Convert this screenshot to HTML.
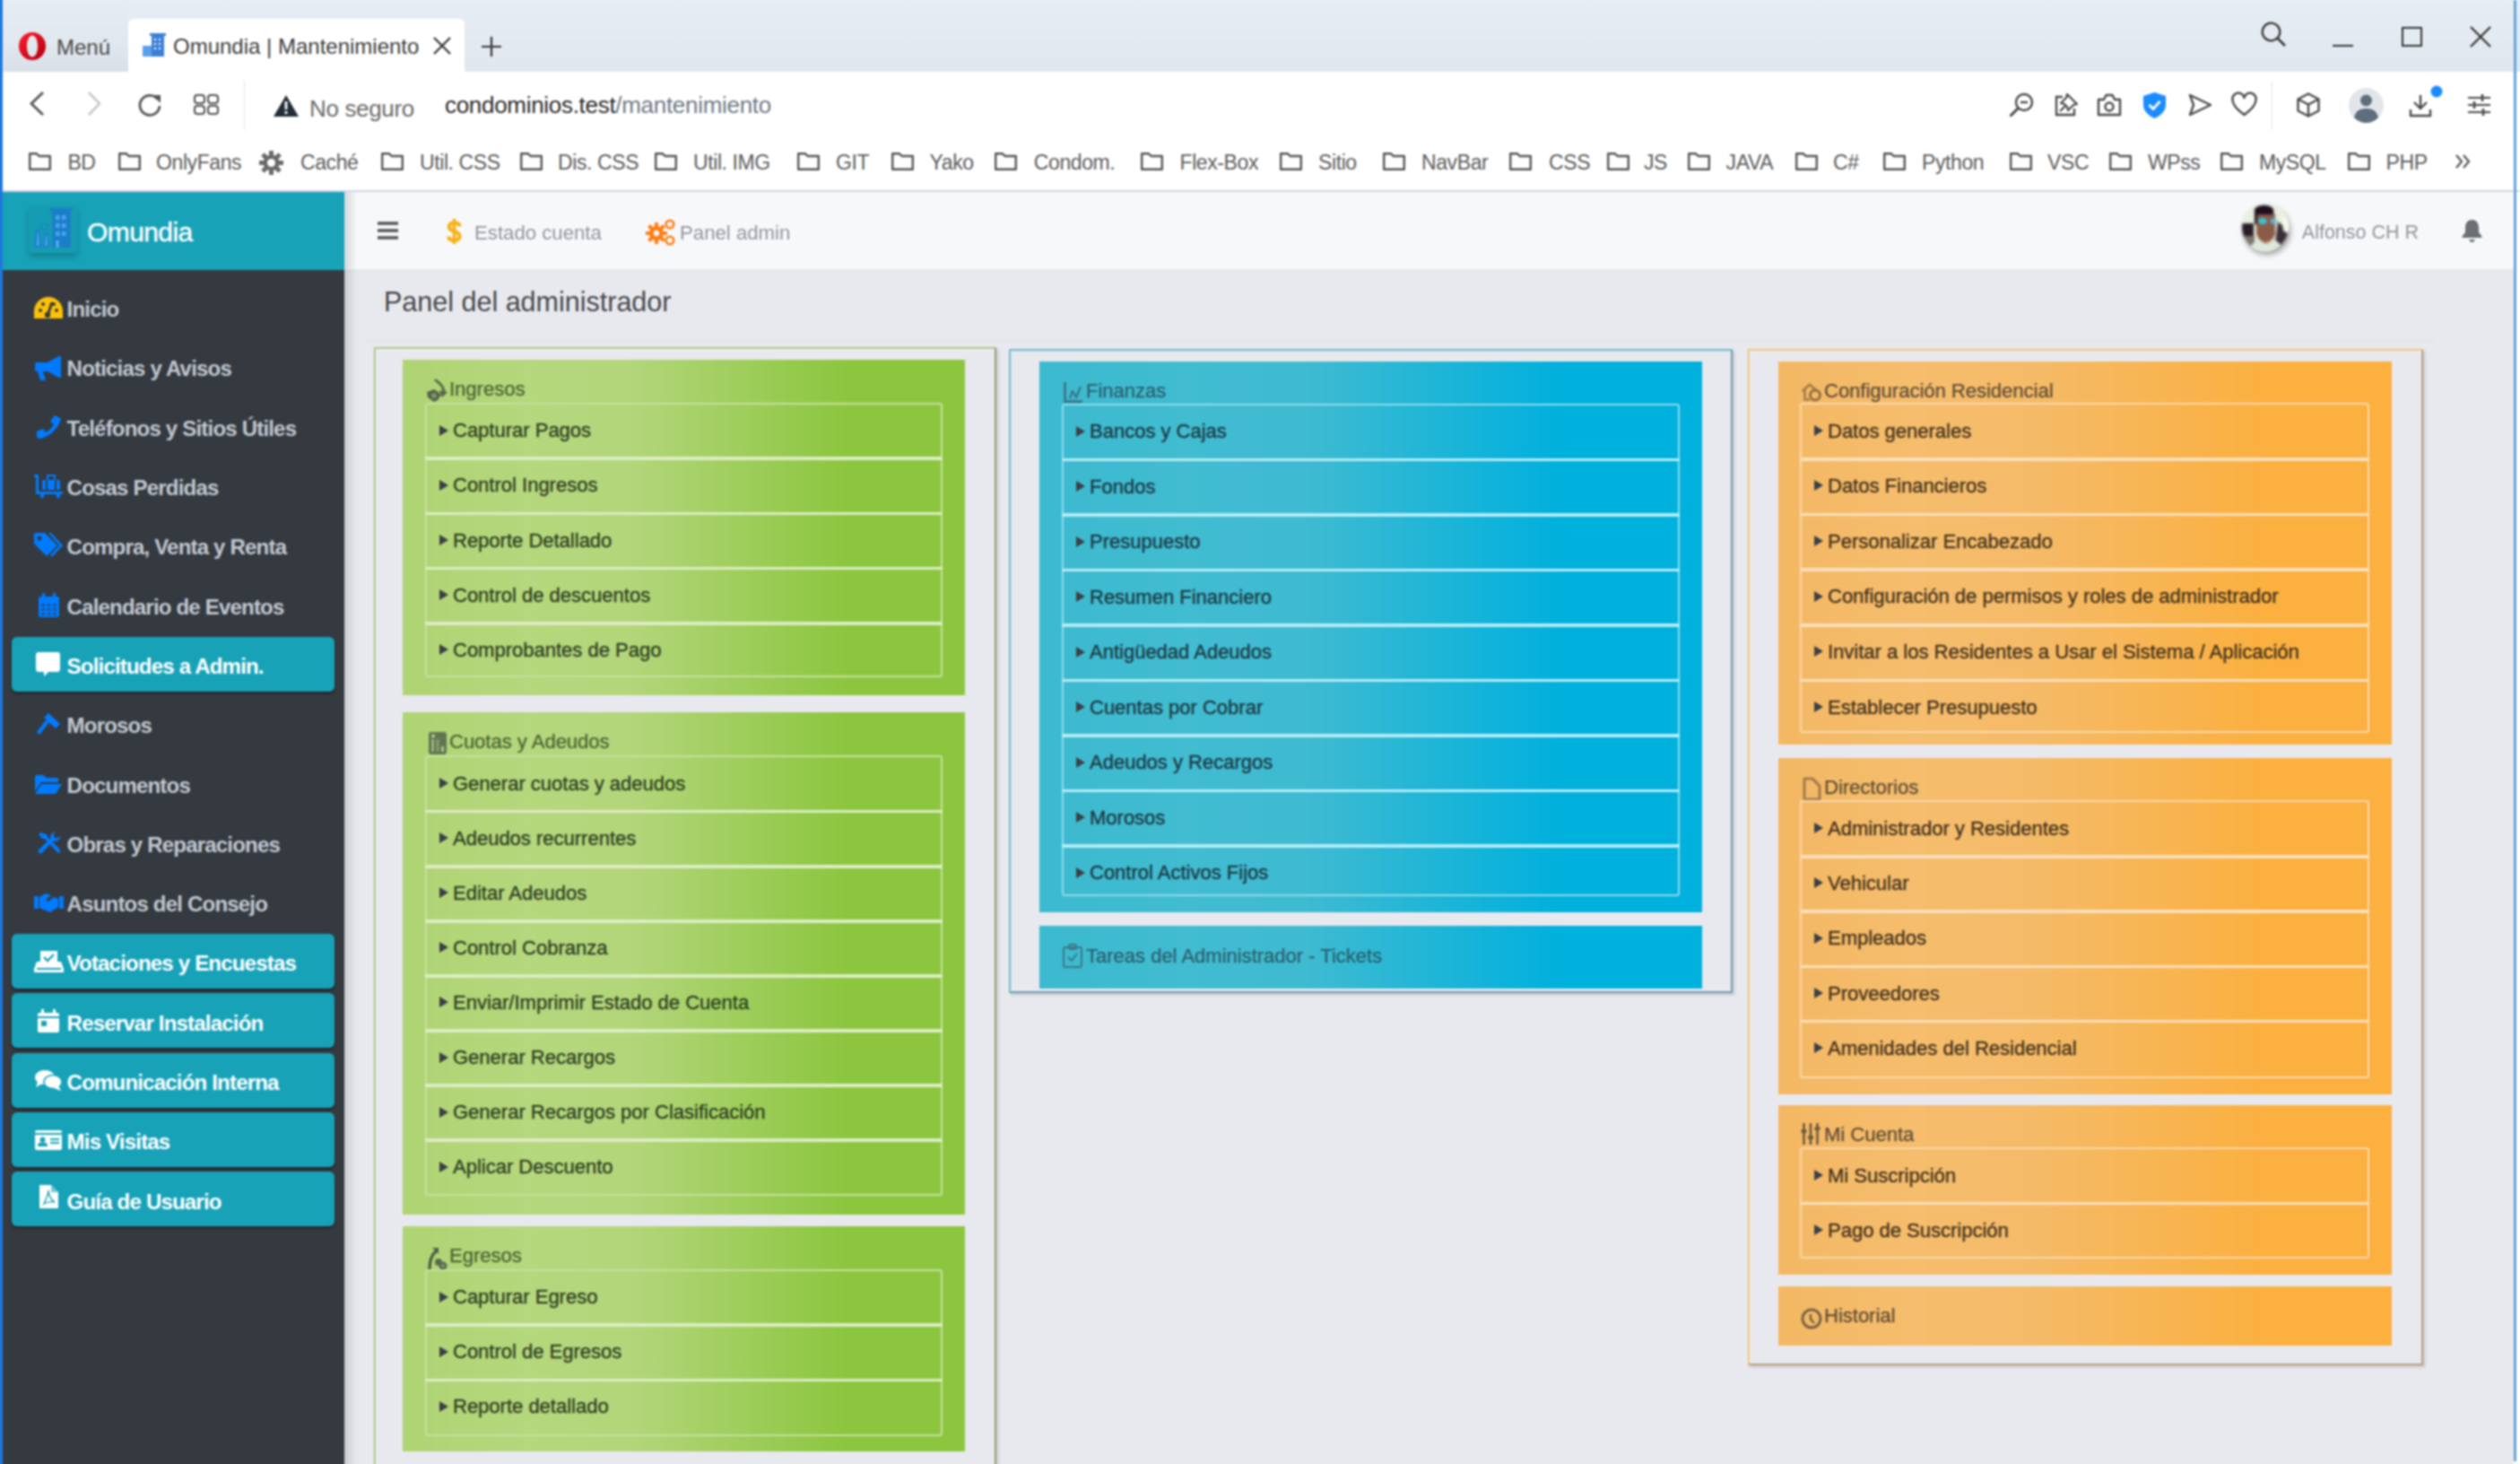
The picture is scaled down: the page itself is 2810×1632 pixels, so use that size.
<!DOCTYPE html>
<html><head><meta charset="utf-8">
<style>
*{box-sizing:border-box;margin:0;padding:0}
html,body{width:2810px;height:1632px;overflow:hidden;background:#fff}
body{position:relative;font-family:"Liberation Sans",sans-serif}
.a{position:absolute}
.t{position:absolute;white-space:nowrap}
svg{position:absolute;overflow:visible}

</style></head><body>
<div style="position:absolute;left:0;top:0;width:2810px;height:1632px;filter:blur(1px)">
<div class="a" style="left:-6px;top:-6px;width:2822px;height:86px;background:linear-gradient(#e7edf4 7%,#e1e7ef)"></div>
<div class="a" style="left:5px;top:0;width:138px;height:80px;background:linear-gradient(#e6ecf3 0%,#e2e8f0 60%,#d9dfe7 100%)"></div>
<div class="a" style="left:0;top:80px;width:2810px;height:133px;background:#fff"></div>
<div class="a" style="left:0;top:212px;width:2810px;height:2px;background:#cfd6df"></div>
<div class="a" style="left:143px;top:21px;width:375px;height:60px;background:#fff;border-radius:6px 6px 0 0"></div>
<svg style="left:21px;top:36px" width="30" height="31" viewBox="0 0 30 31"><defs><linearGradient id="opg" x1="0" y1="0" x2="1" y2="1"><stop offset="0" stop-color="#ff1b2d"/><stop offset="1" stop-color="#b0000f"/></linearGradient></defs><path fill-rule="evenodd" fill="url(#opg)" d="M15 0A15 15.5 0 1 1 15 31A15 15.5 0 1 1 15 0ZM15 3.5C11.5 3.5 9 8.5 9 15.5C9 22.5 11.5 27.5 15 27.5C18.5 27.5 21 22.5 21 15.5C21 8.5 18.5 3.5 15 3.5Z"/></svg>
<div class="t " style="left:63.0px;top:38.9px;font-size:24px;line-height:27.60px;color:#4a4a4a;font-weight:normal;">Menú</div>
<svg style="left:158px;top:37px" width="27" height="26" viewBox="0 0 27 26"><rect x="11" y="2" width="14" height="24" fill="#3c7fd6"/><rect x="9" y="0" width="18" height="3" fill="#3c7fd6"/><rect x="1" y="14" width="10" height="12" fill="#5aa0ea"/><rect x="14" y="6" width="2" height="2" fill="#fff"/><rect x="19" y="6" width="2" height="2" fill="#fff"/><rect x="14" y="11" width="2" height="2" fill="#fff"/><rect x="19" y="11" width="2" height="2" fill="#fff"/><rect x="14" y="16" width="2" height="2" fill="#fff"/><rect x="19" y="16" width="2" height="2" fill="#fff"/></svg>
<div class="t " style="left:193.0px;top:37.9px;font-size:24px;line-height:27.60px;color:#3c3c3c;font-weight:normal;letter-spacing:0px">Omundia&nbsp;|&nbsp;Mantenimiento</div>
<svg style="left:483px;top:41px" width="20" height="20" viewBox="0 0 20 20"><path d="M1 1L19 19M19 1L1 19" stroke="#333" stroke-width="2.2"/></svg>
<svg style="left:537px;top:41px" width="22" height="22" viewBox="0 0 22 22"><path d="M11 0V22M0 11H22" stroke="#333" stroke-width="2.2"/></svg>
<svg style="left:2521px;top:24px" width="30" height="29" viewBox="0 0 30 29"><circle cx="11.5" cy="11.5" r="9.8" fill="none" stroke="#3a3a3a" stroke-width="2.3"/><path d="M18 18L27 27" stroke="#3a3a3a" stroke-width="2.6"/></svg>
<div class="a" style="left:2601px;top:50px;width:23px;height:2px;background:#333"></div>
<div class="a" style="left:2678px;top:30px;width:23px;height:22px;border:2px solid #333"></div>
<svg style="left:2754px;top:30px" width="24" height="22" viewBox="0 0 24 22"><path d="M1 0L23 22M23 0L1 22" stroke="#333" stroke-width="2.2"/></svg>
<svg style="left:32px;top:102px" width="18" height="27" viewBox="0 0 18 27"><path d="M16 1L3 13.5L16 26" fill="none" stroke="#555" stroke-width="2.8"/></svg>
<svg style="left:97px;top:102px" width="16" height="27" viewBox="0 0 16 27"><path d="M2 1L14 13.5L2 26" fill="none" stroke="#c8c8c8" stroke-width="2.6"/></svg>
<svg style="left:153px;top:103px" width="28" height="27" viewBox="0 0 28 27"><path d="M23 8A11 11 0 1 0 25 15" fill="none" stroke="#555" stroke-width="2.8"/><path d="M17 3L26 3L26 12Z" fill="#555"/></svg>
<svg style="left:216px;top:105px" width="28" height="23" viewBox="0 0 28 23"><g fill="none" stroke="#505050" stroke-width="2"><rect x="1" y="1" width="11" height="9" rx="3"/><rect x="16" y="1" width="11" height="9" rx="3"/><rect x="1" y="13" width="11" height="9" rx="3"/><rect x="16" y="13" width="11" height="9" rx="3"/></g></svg>
<div class="a" style="left:272px;top:90px;width:1px;height:55px;background:#e3e3e3"></div>
<svg style="left:305px;top:106px" width="28" height="24" viewBox="0 0 28 24"><path d="M14 0L28 24H0Z" fill="#222d37"/><rect x="12.6" y="7" width="2.8" height="9" fill="#fff"/><rect x="12.6" y="18" width="2.8" height="3" fill="#fff"/></svg>
<div class="t " style="left:345.0px;top:107.0px;font-size:26px;line-height:29.90px;color:#6a6a6a;font-weight:normal;letter-spacing:-0.35px">No seguro</div>
<div class="t " style="left:496.0px;top:103.0px;font-size:26px;line-height:29.90px;color:#2a2a2a;font-weight:normal;letter-spacing:-0.3px">condominios.test<span style="color:#6f7a85">/mantenimiento</span></div>
<svg style="left:2240px;top:103px" width="28" height="28" viewBox="0 0 28 28"><circle cx="17" cy="11" r="9" fill="none" stroke="#4a4a4a" stroke-width="2.4"/><path d="M13 11H21" stroke="#4a4a4a" stroke-width="2.4"/><path d="M10.5 17.5L1.5 26.5" stroke="#4a4a4a" stroke-width="3"/></svg>
<svg style="left:2291px;top:103px" width="27" height="27" viewBox="0 0 27 27"><path d="M9 5H2V25H22V18" fill="none" stroke="#4a4a4a" stroke-width="2.3"/><path d="M14 2L25 13L21 14L15 20L14 16L11 13L7 12L13 6Z" fill="none" stroke="#4a4a4a" stroke-width="2.2" stroke-linejoin="round"/><path d="M6 21L12 15" stroke="#4a4a4a" stroke-width="2.3"/></svg>
<svg style="left:2338px;top:104px" width="28" height="26" viewBox="0 0 28 26"><path d="M2 7H8L10.5 2H17.5L20 7H26V24H2Z" fill="none" stroke="#4a4a4a" stroke-width="2.4" stroke-linejoin="round"/><circle cx="14" cy="15" r="4.5" fill="none" stroke="#4a4a4a" stroke-width="2.4"/></svg>
<svg style="left:2390px;top:103px" width="25" height="29" viewBox="0 0 25 29"><path d="M12.5 0L25 4V14C25 21 19 26 12.5 29C6 26 0 21 0 14V4Z" fill="#1a8cff"/><path d="M6.5 14L11 18.5L18.5 10" fill="none" stroke="#fff" stroke-width="2.8"/></svg>
<svg style="left:2440px;top:104px" width="27" height="26" viewBox="0 0 27 26"><path d="M2 2L25 13L2 24L6 13Z" fill="none" stroke="#4a4a4a" stroke-width="2.4" stroke-linejoin="round"/></svg>
<svg style="left:2488px;top:104px" width="29" height="26" viewBox="0 0 29 26"><path d="M14.5 24C5 17 1.5 12 1.5 7.5A6 6 0 0 1 14.5 5A6 6 0 0 1 27.5 7.5C27.5 12 24 17 14.5 24Z" fill="none" stroke="#4a4a4a" stroke-width="2.4" stroke-linejoin="round"/></svg>
<div class="a" style="left:2533px;top:92px;width:1px;height:53px;background:#e4e4e4"></div>
<svg style="left:2561px;top:103px" width="26" height="28" viewBox="0 0 26 28"><path d="M13 1.5L24.5 7.5V20.5L13 26.5L1.5 20.5V7.5Z M1.5 7.5L13 13.5L24.5 7.5 M13 13.5V26.5" fill="none" stroke="#4a4a4a" stroke-width="2.4" stroke-linejoin="round"/></svg>
<svg style="left:2619px;top:98px" width="39" height="39" viewBox="0 0 39 39"><circle cx="19.5" cy="19.5" r="19.5" fill="#e2e6ea"/><circle cx="19.5" cy="14" r="6.5" fill="#5f6e7c"/><path d="M6 33C8 25 13 23 19.5 23C26 23 31 25 33 33C29 37 24 39 19.5 39C15 39 10 37 6 33Z" fill="#5f6e7c"/></svg>
<svg style="left:2686px;top:102px" width="40" height="29" viewBox="0 0 40 29"><path d="M13 4V19M6 12L13 19L20 12" fill="none" stroke="#4a4a4a" stroke-width="2.4"/><path d="M2 20V27H24V20" fill="none" stroke="#4a4a4a" stroke-width="2.4"/><circle cx="31" cy="0" r="6.5" fill="#1a8cff"/></svg>
<svg style="left:2752px;top:105px" width="25" height="24" viewBox="0 0 25 24"><path d="M0 4H25M0 12H25M0 20H25" stroke="#4a4a4a" stroke-width="2.2"/><path d="M16 0V8M7 8V16M17 16V24" stroke="#4a4a4a" stroke-width="2.6"/></svg>
<svg style="left:32px;top:170px" width="25" height="20" viewBox="0 0 25 20"><path d="M1.2 1.2H9L11.5 4H23.8V18.8H1.2Z" fill="none" stroke="#555" stroke-width="2.4" stroke-linejoin="round"/></svg>
<div class="t " style="left:75.4px;top:167.8px;font-size:23px;line-height:26.45px;color:#5c5c5c;font-weight:normal;letter-spacing:-0.4px">BD</div>
<svg style="left:132px;top:170px" width="25" height="20" viewBox="0 0 25 20"><path d="M1.2 1.2H9L11.5 4H23.8V18.8H1.2Z" fill="none" stroke="#555" stroke-width="2.4" stroke-linejoin="round"/></svg>
<div class="t " style="left:174.0px;top:167.8px;font-size:23px;line-height:26.45px;color:#5c5c5c;font-weight:normal;letter-spacing:-0.4px">OnlyFans</div>
<div class="t " style="left:335.0px;top:167.8px;font-size:23px;line-height:26.45px;color:#5c5c5c;font-weight:normal;letter-spacing:-0.4px">Caché</div>
<svg style="left:425px;top:170px" width="25" height="20" viewBox="0 0 25 20"><path d="M1.2 1.2H9L11.5 4H23.8V18.8H1.2Z" fill="none" stroke="#555" stroke-width="2.4" stroke-linejoin="round"/></svg>
<div class="t " style="left:468.0px;top:167.8px;font-size:23px;line-height:26.45px;color:#5c5c5c;font-weight:normal;letter-spacing:-0.4px">Util. CSS</div>
<svg style="left:580px;top:170px" width="25" height="20" viewBox="0 0 25 20"><path d="M1.2 1.2H9L11.5 4H23.8V18.8H1.2Z" fill="none" stroke="#555" stroke-width="2.4" stroke-linejoin="round"/></svg>
<div class="t " style="left:622.0px;top:167.8px;font-size:23px;line-height:26.45px;color:#5c5c5c;font-weight:normal;letter-spacing:-0.4px">Dis. CSS</div>
<svg style="left:730px;top:170px" width="25" height="20" viewBox="0 0 25 20"><path d="M1.2 1.2H9L11.5 4H23.8V18.8H1.2Z" fill="none" stroke="#555" stroke-width="2.4" stroke-linejoin="round"/></svg>
<div class="t " style="left:773.0px;top:167.8px;font-size:23px;line-height:26.45px;color:#5c5c5c;font-weight:normal;letter-spacing:-0.4px">Util. IMG</div>
<svg style="left:889px;top:170px" width="25" height="20" viewBox="0 0 25 20"><path d="M1.2 1.2H9L11.5 4H23.8V18.8H1.2Z" fill="none" stroke="#555" stroke-width="2.4" stroke-linejoin="round"/></svg>
<div class="t " style="left:932.0px;top:167.8px;font-size:23px;line-height:26.45px;color:#5c5c5c;font-weight:normal;letter-spacing:-0.4px">GIT</div>
<svg style="left:994px;top:170px" width="25" height="20" viewBox="0 0 25 20"><path d="M1.2 1.2H9L11.5 4H23.8V18.8H1.2Z" fill="none" stroke="#555" stroke-width="2.4" stroke-linejoin="round"/></svg>
<div class="t " style="left:1036.5px;top:167.8px;font-size:23px;line-height:26.45px;color:#5c5c5c;font-weight:normal;letter-spacing:-0.4px">Yako</div>
<svg style="left:1109px;top:170px" width="25" height="20" viewBox="0 0 25 20"><path d="M1.2 1.2H9L11.5 4H23.8V18.8H1.2Z" fill="none" stroke="#555" stroke-width="2.4" stroke-linejoin="round"/></svg>
<div class="t " style="left:1152.8px;top:167.8px;font-size:23px;line-height:26.45px;color:#5c5c5c;font-weight:normal;letter-spacing:-0.4px">Condom.</div>
<svg style="left:1272px;top:170px" width="25" height="20" viewBox="0 0 25 20"><path d="M1.2 1.2H9L11.5 4H23.8V18.8H1.2Z" fill="none" stroke="#555" stroke-width="2.4" stroke-linejoin="round"/></svg>
<div class="t " style="left:1315.5px;top:167.8px;font-size:23px;line-height:26.45px;color:#5c5c5c;font-weight:normal;letter-spacing:-0.4px">Flex-Box</div>
<svg style="left:1427px;top:170px" width="25" height="20" viewBox="0 0 25 20"><path d="M1.2 1.2H9L11.5 4H23.8V18.8H1.2Z" fill="none" stroke="#555" stroke-width="2.4" stroke-linejoin="round"/></svg>
<div class="t " style="left:1470.0px;top:167.8px;font-size:23px;line-height:26.45px;color:#5c5c5c;font-weight:normal;letter-spacing:-0.4px">Sitio</div>
<svg style="left:1542px;top:170px" width="25" height="20" viewBox="0 0 25 20"><path d="M1.2 1.2H9L11.5 4H23.8V18.8H1.2Z" fill="none" stroke="#555" stroke-width="2.4" stroke-linejoin="round"/></svg>
<div class="t " style="left:1585.0px;top:167.8px;font-size:23px;line-height:26.45px;color:#5c5c5c;font-weight:normal;letter-spacing:-0.4px">NavBar</div>
<svg style="left:1683px;top:170px" width="25" height="20" viewBox="0 0 25 20"><path d="M1.2 1.2H9L11.5 4H23.8V18.8H1.2Z" fill="none" stroke="#555" stroke-width="2.4" stroke-linejoin="round"/></svg>
<div class="t " style="left:1727.0px;top:167.8px;font-size:23px;line-height:26.45px;color:#5c5c5c;font-weight:normal;letter-spacing:-0.4px">CSS</div>
<svg style="left:1792px;top:170px" width="25" height="20" viewBox="0 0 25 20"><path d="M1.2 1.2H9L11.5 4H23.8V18.8H1.2Z" fill="none" stroke="#555" stroke-width="2.4" stroke-linejoin="round"/></svg>
<div class="t " style="left:1833.0px;top:167.8px;font-size:23px;line-height:26.45px;color:#5c5c5c;font-weight:normal;letter-spacing:-0.4px">JS</div>
<svg style="left:1882px;top:170px" width="25" height="20" viewBox="0 0 25 20"><path d="M1.2 1.2H9L11.5 4H23.8V18.8H1.2Z" fill="none" stroke="#555" stroke-width="2.4" stroke-linejoin="round"/></svg>
<div class="t " style="left:1924.6px;top:167.8px;font-size:23px;line-height:26.45px;color:#5c5c5c;font-weight:normal;letter-spacing:-0.4px">JAVA</div>
<svg style="left:2002px;top:170px" width="25" height="20" viewBox="0 0 25 20"><path d="M1.2 1.2H9L11.5 4H23.8V18.8H1.2Z" fill="none" stroke="#555" stroke-width="2.4" stroke-linejoin="round"/></svg>
<div class="t " style="left:2044.0px;top:167.8px;font-size:23px;line-height:26.45px;color:#5c5c5c;font-weight:normal;letter-spacing:-0.4px">C#</div>
<svg style="left:2100px;top:170px" width="25" height="20" viewBox="0 0 25 20"><path d="M1.2 1.2H9L11.5 4H23.8V18.8H1.2Z" fill="none" stroke="#555" stroke-width="2.4" stroke-linejoin="round"/></svg>
<div class="t " style="left:2143.0px;top:167.8px;font-size:23px;line-height:26.45px;color:#5c5c5c;font-weight:normal;letter-spacing:-0.4px">Python</div>
<svg style="left:2241px;top:170px" width="25" height="20" viewBox="0 0 25 20"><path d="M1.2 1.2H9L11.5 4H23.8V18.8H1.2Z" fill="none" stroke="#555" stroke-width="2.4" stroke-linejoin="round"/></svg>
<div class="t " style="left:2283.0px;top:167.8px;font-size:23px;line-height:26.45px;color:#5c5c5c;font-weight:normal;letter-spacing:-0.4px">VSC</div>
<svg style="left:2352px;top:170px" width="25" height="20" viewBox="0 0 25 20"><path d="M1.2 1.2H9L11.5 4H23.8V18.8H1.2Z" fill="none" stroke="#555" stroke-width="2.4" stroke-linejoin="round"/></svg>
<div class="t " style="left:2395.0px;top:167.8px;font-size:23px;line-height:26.45px;color:#5c5c5c;font-weight:normal;letter-spacing:-0.4px">WPss</div>
<svg style="left:2476px;top:170px" width="25" height="20" viewBox="0 0 25 20"><path d="M1.2 1.2H9L11.5 4H23.8V18.8H1.2Z" fill="none" stroke="#555" stroke-width="2.4" stroke-linejoin="round"/></svg>
<div class="t " style="left:2519.0px;top:167.8px;font-size:23px;line-height:26.45px;color:#5c5c5c;font-weight:normal;letter-spacing:-0.4px">MySQL</div>
<svg style="left:2618px;top:170px" width="25" height="20" viewBox="0 0 25 20"><path d="M1.2 1.2H9L11.5 4H23.8V18.8H1.2Z" fill="none" stroke="#555" stroke-width="2.4" stroke-linejoin="round"/></svg>
<div class="t " style="left:2660.6px;top:167.8px;font-size:23px;line-height:26.45px;color:#5c5c5c;font-weight:normal;letter-spacing:-0.4px">PHP</div>
<svg style="left:289px;top:168px" width="27" height="27" viewBox="0 0 27 27"><g fill="#6a6a6a"><circle cx="13.5" cy="13.5" r="9"/><rect x="11" y="0" width="5" height="6" transform="rotate(0 13.5 13.5)"/><rect x="11" y="0" width="5" height="6" transform="rotate(45 13.5 13.5)"/><rect x="11" y="0" width="5" height="6" transform="rotate(90 13.5 13.5)"/><rect x="11" y="0" width="5" height="6" transform="rotate(135 13.5 13.5)"/><rect x="11" y="0" width="5" height="6" transform="rotate(180 13.5 13.5)"/><rect x="11" y="0" width="5" height="6" transform="rotate(225 13.5 13.5)"/><rect x="11" y="0" width="5" height="6" transform="rotate(270 13.5 13.5)"/><rect x="11" y="0" width="5" height="6" transform="rotate(315 13.5 13.5)"/></g><circle cx="13.5" cy="13.5" r="4.5" fill="#fff"/></svg>
<svg style="left:2738px;top:172px" width="17" height="16" viewBox="0 0 17 16"><path d="M1 1L7 8L1 15M9 1L15 8L9 15" fill="none" stroke="#555" stroke-width="2.2"/></svg>
<div class="a" style="left:-6px;top:214px;width:390px;height:1440px;background:#343a40"></div>
<div class="a" style="left:0;top:214px;width:384px;height:87px;background:#17a2b8"></div>
<div class="a" style="left:32px;top:230px;width:54px;height:52px;box-shadow:0 4px 7px rgba(0,0,0,.22);border-radius:3px;background:rgba(0,0,0,.03)"></div>
<svg style="left:30px;top:230px" width="56" height="50" viewBox="0 0 56 50"><g fill="#1a7fc8"><path d="M25 2H51L49 6H27Z"/><rect x="28" y="6" width="21" height="40"/><path d="M8 46L9.5 28C10 25 14 25 14.5 28L16 46Z"/><path d="M18 46L19.5 31C20 28 23.5 28 24 31L25 46Z"/><ellipse cx="19.5" cy="23" rx="4.5" ry="3" fill="none" stroke="#1a86c0" stroke-width="1.6"/></g><g fill="#4aa3f0"><rect x="32" y="10" width="4.5" height="5"/><rect x="32" y="19" width="4.5" height="5"/><rect x="32" y="28" width="4.5" height="5"/><rect x="39" y="10" width="4.5" height="5"/><rect x="39" y="19" width="4.5" height="5"/><rect x="39" y="28" width="4.5" height="5"/><rect x="32" y="38" width="4" height="8"/><path d="M10.5 44L11.5 30C12 28.5 13 28.5 13 30L14 44Z"/><path d="M20 44L21 33C21.5 31.5 22 31.5 22.5 33L23 44Z"/></g></svg>
<div class="t " style="left:97.0px;top:241.9px;font-size:30px;line-height:34.50px;color:#fff;font-weight:normal;letter-spacing:-0.6px;-webkit-text-stroke:0.4px #fff">Omundia</div>
<svg style="left:38px;top:331px" width="32" height="24" viewBox="0 0 32 24"><path d="M16 0A16 16 0 0 1 32 16V24H0V16A16 16 0 0 1 16 0Z" fill="#ffc107"/><circle cx="7" cy="15" r="2" fill="#343a40"/><circle cx="10" cy="8" r="2" fill="#343a40"/><circle cx="25" cy="15" r="2" fill="#343a40"/><circle cx="22" cy="8" r="2" fill="#343a40"/><path d="M15 21L20 6" stroke="#343a40" stroke-width="3"/><circle cx="15" cy="20" r="3.2" fill="#343a40"/></svg>
<div class="t " style="left:74.6px;top:331.1px;font-size:24px;line-height:27.60px;color:#c2c7d0;font-weight:bold;letter-spacing:-0.8px">Inicio</div>
<svg style="left:39px;top:397px" width="30" height="27" viewBox="0 0 30 27"><path d="M27 0L29 0V24L27 24L14 17H9L12 27H6L3 17H2A2 2 0 0 1 0 15V9A2 2 0 0 1 2 7H14Z" fill="#007bff"/></svg>
<div class="t " style="left:74.6px;top:397.4px;font-size:24px;line-height:27.60px;color:#c2c7d0;font-weight:bold;letter-spacing:-0.8px">Noticias y Avisos</div>
<svg style="left:41px;top:463px" width="27" height="26" viewBox="0 0 27 26"><path d="M20 0L26 3C27 4 27 5 26 7C21 18 13 24 4 26C2 26 1 25 0 24L0 18L7 15L10 19C14 17 17 14 19 10L15 7Z" fill="#007bff"/></svg>
<div class="t " style="left:74.6px;top:463.7px;font-size:24px;line-height:27.60px;color:#c2c7d0;font-weight:bold;letter-spacing:-0.8px">Teléfonos y Sitios Útiles</div>
<svg style="left:38px;top:528px" width="32" height="27" viewBox="0 0 32 27"><path d="M0 1H5V20H32V23H2V4H0Z" fill="#007bff"/><rect x="9" y="7" width="20" height="11" rx="1.5" fill="#007bff"/><rect x="15" y="2" width="8" height="6" fill="none" stroke="#007bff" stroke-width="2"/><circle cx="9" cy="25" r="2.3" fill="#007bff"/><circle cx="27" cy="25" r="2.3" fill="#007bff"/><rect x="13" y="7" width="2" height="11" fill="#343a40"/><rect x="23" y="7" width="2" height="11" fill="#343a40"/></svg>
<div class="t " style="left:74.6px;top:530.0px;font-size:24px;line-height:27.60px;color:#c2c7d0;font-weight:bold;letter-spacing:-0.8px">Cosas Perdidas</div>
<svg style="left:38px;top:594px" width="32" height="27" viewBox="0 0 32 27"><path d="M0 2A2 2 0 0 1 2 0H12L26 14L14 26L0 12Z" fill="#007bff"/><circle cx="6" cy="6" r="2.5" fill="#343a40"/><path d="M16 0H19L32 14L20 27L18 25L28 14Z" fill="#007bff"/></svg>
<div class="t " style="left:74.6px;top:596.3px;font-size:24px;line-height:27.60px;color:#c2c7d0;font-weight:bold;letter-spacing:-0.8px">Compra, Venta y Renta</div>
<svg style="left:43px;top:661px" width="23" height="27" viewBox="0 0 23 27"><rect x="0" y="4" width="23" height="23" rx="2" fill="#007bff"/><rect x="4" y="0" width="3" height="6" fill="#007bff"/><rect x="16" y="0" width="3" height="6" fill="#007bff"/><rect x="3" y="12" width="4" height="3" fill="#343a40" opacity=".55"/><rect x="3" y="17" width="4" height="3" fill="#343a40" opacity=".55"/><rect x="3" y="22" width="4" height="3" fill="#343a40" opacity=".55"/><rect x="9.5" y="12" width="4" height="3" fill="#343a40" opacity=".55"/><rect x="9.5" y="17" width="4" height="3" fill="#343a40" opacity=".55"/><rect x="9.5" y="22" width="4" height="3" fill="#343a40" opacity=".55"/><rect x="16" y="12" width="4" height="3" fill="#343a40" opacity=".55"/><rect x="16" y="17" width="4" height="3" fill="#343a40" opacity=".55"/><rect x="16" y="22" width="4" height="3" fill="#343a40" opacity=".55"/></svg>
<div class="t " style="left:74.6px;top:662.6px;font-size:24px;line-height:27.60px;color:#c2c7d0;font-weight:bold;letter-spacing:-0.8px">Calendario de Eventos</div>
<div class="a" style="left:13px;top:709.5px;width:360px;height:61px;border-radius:6px;background:#17a2b8;box-shadow:0 2px 3px rgba(0,0,0,.4)"></div>
<svg style="left:40px;top:727px" width="27" height="27" viewBox="0 0 27 27"><path d="M3 0H24A3 3 0 0 1 27 3V19A3 3 0 0 1 24 22H14L9 27V22H3A3 3 0 0 1 0 19V3A3 3 0 0 1 3 0Z" fill="#ffffff"/></svg>
<div class="t " style="left:74.6px;top:728.9px;font-size:24px;line-height:27.60px;color:#fff;font-weight:bold;letter-spacing:-0.8px">Solicitudes a Admin.</div>
<svg style="left:41px;top:795px" width="26" height="25" viewBox="0 0 26 25"><path d="M13 0L26 12L21 17L8 5Z" fill="#007bff"/><path d="M14 10L3 24L0 21L10 8Z" fill="#007bff"/></svg>
<div class="t " style="left:74.6px;top:795.2px;font-size:24px;line-height:27.60px;color:#c2c7d0;font-weight:bold;letter-spacing:-0.8px">Morosos</div>
<svg style="left:39px;top:864px" width="30" height="21" viewBox="0 0 30 21"><path d="M0 2A2 2 0 0 1 2 0H10L12 3H24A2 2 0 0 1 26 5V8H7L0 18Z" fill="#007bff"/><path d="M7 10H30L23 21H0Z" fill="#007bff"/></svg>
<div class="t " style="left:74.6px;top:861.5px;font-size:24px;line-height:27.60px;color:#c2c7d0;font-weight:bold;letter-spacing:-0.8px">Documentos</div>
<svg style="left:42px;top:927px" width="26" height="25" viewBox="0 0 26 25"><path d="M3 1L1 3L5 8L8 8L20 21L23 24L26 22L23 18L11 6L10 3Z" fill="#007bff"/><path d="M20 0A6 6 0 0 0 14.5 7.5L1 20.5A2.5 2.5 0 0 0 4.5 24L17.5 10.5A6 6 0 0 0 25.5 5L22 7.5L18.5 6.5L17.5 3Z" fill="#007bff"/></svg>
<div class="t " style="left:74.6px;top:927.8px;font-size:24px;line-height:27.60px;color:#c2c7d0;font-weight:bold;letter-spacing:-0.8px">Obras y Reparaciones</div>
<svg style="left:38px;top:996px" width="33" height="21" viewBox="0 0 33 21"><rect x="0" y="3" width="5" height="14" fill="#007bff"/><rect x="28" y="3" width="5" height="14" fill="#007bff"/><path d="M6 4L13 0L19 2L13 7L16 9L22 4L27 6V15L18 21L6 16Z" fill="#007bff"/></svg>
<div class="t " style="left:74.6px;top:994.1px;font-size:24px;line-height:27.60px;color:#c2c7d0;font-weight:bold;letter-spacing:-0.8px">Asuntos del Consejo</div>
<div class="a" style="left:13px;top:1041.0px;width:360px;height:61px;border-radius:6px;background:#17a2b8;box-shadow:0 2px 3px rgba(0,0,0,.4)"></div>
<svg style="left:38px;top:1060px" width="33" height="24" viewBox="0 0 33 24"><rect x="7" y="0" width="19" height="15" fill="#ffffff"/><path d="M11 7L15 11L22 4" fill="none" stroke="#17a2b8" stroke-width="2.4"/><path d="M3 12H7V15H26V12H30L33 20V24H0V20Z" fill="#ffffff"/><rect x="3" y="19" width="27" height="2" fill="#17a2b8"/></svg>
<div class="t " style="left:74.6px;top:1060.4px;font-size:24px;line-height:27.60px;color:#fff;font-weight:bold;letter-spacing:-0.8px">Votaciones y Encuestas</div>
<div class="a" style="left:13px;top:1107.3px;width:360px;height:61px;border-radius:6px;background:#17a2b8;box-shadow:0 2px 3px rgba(0,0,0,.4)"></div>
<svg style="left:42px;top:1125px" width="24" height="26" viewBox="0 0 24 26"><rect x="0" y="4" width="24" height="22" rx="2" fill="#ffffff"/><rect x="4" y="0" width="3" height="6" fill="#ffffff"/><rect x="17" y="0" width="3" height="6" fill="#ffffff"/><rect x="0" y="8" width="24" height="2" fill="#17a2b8"/><rect x="4" y="13" width="6" height="6" fill="#17a2b8"/></svg>
<div class="t " style="left:74.6px;top:1126.7px;font-size:24px;line-height:27.60px;color:#fff;font-weight:bold;letter-spacing:-0.8px">Reservar Instalación</div>
<div class="a" style="left:13px;top:1173.6px;width:360px;height:61px;border-radius:6px;background:#17a2b8;box-shadow:0 2px 3px rgba(0,0,0,.4)"></div>
<svg style="left:39px;top:1192px" width="30" height="24" viewBox="0 0 30 24"><ellipse cx="11" cy="9" rx="11" ry="8" fill="#ffffff"/><path d="M3 14L1 20L8 16Z" fill="#ffffff"/><ellipse cx="20" cy="14" rx="10" ry="7.5" fill="#ffffff" stroke="#17a2b8" stroke-width="1.5"/><path d="M26 18L29 24L21 21Z" fill="#ffffff"/></svg>
<div class="t " style="left:74.6px;top:1193.0px;font-size:24px;line-height:27.60px;color:#fff;font-weight:bold;letter-spacing:-0.8px">Comunicación Interna</div>
<div class="a" style="left:13px;top:1239.9px;width:360px;height:61px;border-radius:6px;background:#17a2b8;box-shadow:0 2px 3px rgba(0,0,0,.4)"></div>
<svg style="left:39px;top:1260px" width="30" height="22" viewBox="0 0 30 22"><rect x="0" y="0" width="30" height="22" rx="2" fill="#ffffff"/><rect x="0" y="3" width="30" height="2" fill="#17a2b8"/><circle cx="8.5" cy="10.5" r="3" fill="#17a2b8"/><path d="M3 18C3 14 5 13.5 8.5 13.5C12 13.5 14 14 14 18Z" fill="#17a2b8"/><rect x="17" y="9" width="10" height="2" fill="#17a2b8"/><rect x="17" y="13" width="10" height="2" fill="#17a2b8"/></svg>
<div class="t " style="left:74.6px;top:1259.3px;font-size:24px;line-height:27.60px;color:#fff;font-weight:bold;letter-spacing:-0.8px">Mis Visitas</div>
<div class="a" style="left:13px;top:1306.2px;width:360px;height:61px;border-radius:6px;background:#17a2b8;box-shadow:0 2px 3px rgba(0,0,0,.4)"></div>
<svg style="left:44px;top:1321px" width="21" height="26" viewBox="0 0 21 26"><path d="M0 0H13L21 8V26H0Z" fill="#ffffff"/><path d="M13 0V8H21" fill="#17a2b8" opacity=".6"/><path d="M5 21C8 14 10 10 10 6C10 10 12 16 17 19C12 18 8 19 5 21Z" fill="none" stroke="#17a2b8" stroke-width="1.4"/></svg>
<div class="t " style="left:74.6px;top:1325.6px;font-size:24px;line-height:27.60px;color:#fff;font-weight:bold;letter-spacing:-0.8px">Guía de Usuario</div>
<div class="a" style="left:384px;top:214px;width:2419px;height:87px;background:#f7f8fa"></div>
<div class="a" style="left:384px;top:301px;width:2419px;height:1350px;background:#e8e9ee"></div>
<div class="a" style="left:384px;top:214px;width:14px;height:1440px;background:linear-gradient(to right,rgba(0,0,0,.13),rgba(0,0,0,0))"></div>
<div class="a" style="left:384px;top:300px;width:2419px;height:3px;background:linear-gradient(rgba(0,0,0,.05),rgba(0,0,0,0))"></div>
<svg style="left:421px;top:247px" width="23" height="20" viewBox="0 0 23 20"><path d="M0 2H23M0 10H23M0 18H23" stroke="#555" stroke-width="3.4"/></svg>
<svg style="left:498px;top:243px" width="17" height="30" viewBox="0 0 17 30"><path d="M14.5 9.5C14.5 6.5 12 5.5 8.5 5.5C5 5.5 2.8 7 2.8 10C2.8 16 14.5 13.5 14.5 20.5C14.5 23.5 12 24.8 8.5 24.8C5 24.8 2.2 23.5 2.2 20.5" fill="none" stroke="#f7b218" stroke-width="4.2"/><path d="M8.5 1V29" stroke="#f7b218" stroke-width="3.8"/></svg>
<div class="t " style="left:529.0px;top:246.5px;font-size:22.2px;line-height:25.53px;color:#92959e;font-weight:normal;">Estado cuenta</div>
<svg style="left:720px;top:244px" width="33" height="30" viewBox="0 0 33 30"><g fill="#fd7e14"><circle cx="12" cy="16" r="8"/><rect x="10" y="4" width="4" height="6" transform="rotate(0 12 16)"/><rect x="10" y="4" width="4" height="6" transform="rotate(45 12 16)"/><rect x="10" y="4" width="4" height="6" transform="rotate(90 12 16)"/><rect x="10" y="4" width="4" height="6" transform="rotate(135 12 16)"/><rect x="10" y="4" width="4" height="6" transform="rotate(180 12 16)"/><rect x="10" y="4" width="4" height="6" transform="rotate(225 12 16)"/><rect x="10" y="4" width="4" height="6" transform="rotate(270 12 16)"/><rect x="10" y="4" width="4" height="6" transform="rotate(315 12 16)"/></g><circle cx="12" cy="16" r="3.2" fill="#f7f8fa"/><circle cx="27" cy="6" r="4.3" fill="none" stroke="#fd7e14" stroke-width="2.6"/><circle cx="27" cy="24" r="4.3" fill="none" stroke="#fd7e14" stroke-width="2.6"/></svg>
<div class="t " style="left:758.0px;top:246.5px;font-size:22.2px;line-height:25.53px;color:#92959e;font-weight:normal;">Panel admin</div>
<div class="a" style="left:2500px;top:227px;width:52px;height:53px;border-radius:50%;box-shadow:2px 4px 6px rgba(0,0,0,.35)"></div>
<svg style="left:2500px;top:227px;filter:blur(0.8px)" width="52" height="53" viewBox="0 0 52 53"><defs><clipPath id="avc"><ellipse cx="26" cy="26.5" rx="26" ry="26.5"/></clipPath></defs><g clip-path="url(#avc)"><rect width="52" height="53" fill="#e6f0dc"/><rect x="0" y="22" width="13" height="14" fill="#2a1c28"/><rect x="0" y="36" width="14" height="17" fill="#7d726c"/><path d="M40 20L52 30V53H36Z" fill="#3a2f3a"/><path d="M44 14L52 18V34L46 30Z" fill="#f2faea"/><path d="M14 6C18 1 30 0 35 6L36 20L33 26H18L14 22Z" fill="#1e0f1e"/><path d="M17 12H37V34C35 40 30 43 26 43C21 43 17 38 16 33Z" fill="#8a5b47"/><path d="M18 36C21 44 31 46 36 38V48H18Z" fill="#b38f66"/><ellipse cx="23" cy="19.5" rx="5" ry="3.5" fill="#39c6dc"/><ellipse cx="35" cy="19.5" rx="3.5" ry="3.2" fill="#5fb8cf"/><path d="M8 53C10 44 16 40 20 40C24 46 30 46 34 40C40 41 44 46 46 53Z" fill="#dfe8dc"/></g></svg>
<div class="t " style="left:2566.8px;top:246.6px;font-size:21.5px;line-height:24.72px;color:#92959e;font-weight:normal;">Alfonso CH R</div>
<svg style="left:2745px;top:244px" width="23" height="26" viewBox="0 0 23 26"><path d="M11.5 1C6 1 4 5.5 4 10V15L0.5 19.5V21H22.5V19.5L19 15V10C19 5.5 17 1 11.5 1Z" fill="#6b6f76"/><path d="M8.5 23A3 3 0 0 0 14.5 23Z" fill="#6b6f76"/></svg>
<div class="t " style="left:428.0px;top:318.5px;font-size:30.5px;line-height:35.07px;color:#46474b;font-weight:normal;">Panel del administrador</div>
<div class="a" style="left:407px;top:379px;width:2307px;height:1px;background:#dcdde2"></div>
<div class="a" style="left:417px;top:387px;width:694px;height:1313px;border-style:solid;border-width:2.5px;border-color:#b2c49c #8fa376 #8fa376 #b2c49c;box-shadow:inset 1.5px 1.5px 0 #f0f2ee,-1px -1px 0 #e0ecd2,2px 2px 3px rgba(0,0,0,.16)"></div>
<div class="a" style="left:449px;top:401px;width:627px;height:374.0px;background:linear-gradient(to right,#afd473 0%,#b5d77d 22%,#b3d67b 40%,#8cc63f 79%,#8cc63f 100%)"></div>
<svg style="left:476px;top:422.4px" width="23" height="26" viewBox="0 0 23 26"><path d="M10 2C15 5 18 9 19 14" fill="none" stroke="#5b7048" stroke-width="3.2" stroke-linecap="round"/><path d="M14 13L23 15L17 21Z" fill="#556545"/><path d="M0 15L8 12L13 15L16 18L12 24L8 26L1 21Z" fill="#56654a"/><circle cx="8" cy="19" r="3" fill="#7f8f6a"/></svg>
<div class="t " style="left:501.0px;top:421.4px;font-size:22px;line-height:25.30px;color:#4b6333;font-weight:normal;letter-spacing:0px;-webkit-text-stroke:0.25px #4b6333">Ingresos</div>
<div class="a" style="left:474px;top:448.8px;width:577px;height:306.5px;border:2.5px solid #c5e09d;border-radius:3px"></div>
<svg style="left:490px;top:473.5px" width="10" height="12" viewBox="0 0 10 12"><path d="M0 0L10 6L0 12Z" fill="#3b4045"/></svg>
<div class="t " style="left:505.0px;top:467.2px;font-size:22px;line-height:25.30px;color:#2f3f22;font-weight:normal;-webkit-text-stroke:0.35px #2f3f22">Capturar Pagos</div>
<div class="a" style="left:474px;top:509.4px;width:577px;height:3.5px;background:#dbedc3"></div>
<svg style="left:490px;top:534.7px" width="10" height="12" viewBox="0 0 10 12"><path d="M0 0L10 6L0 12Z" fill="#3b4045"/></svg>
<div class="t " style="left:505.0px;top:528.4px;font-size:22px;line-height:25.30px;color:#2f3f22;font-weight:normal;-webkit-text-stroke:0.35px #2f3f22">Control Ingresos</div>
<div class="a" style="left:474px;top:570.6px;width:577px;height:3.5px;background:#dbedc3"></div>
<svg style="left:490px;top:595.9px" width="10" height="12" viewBox="0 0 10 12"><path d="M0 0L10 6L0 12Z" fill="#3b4045"/></svg>
<div class="t " style="left:505.0px;top:589.6px;font-size:22px;line-height:25.30px;color:#2f3f22;font-weight:normal;-webkit-text-stroke:0.35px #2f3f22">Reporte Detallado</div>
<div class="a" style="left:474px;top:631.9px;width:577px;height:3.5px;background:#dbedc3"></div>
<svg style="left:490px;top:657.1px" width="10" height="12" viewBox="0 0 10 12"><path d="M0 0L10 6L0 12Z" fill="#3b4045"/></svg>
<div class="t " style="left:505.0px;top:650.8px;font-size:22px;line-height:25.30px;color:#2f3f22;font-weight:normal;-webkit-text-stroke:0.35px #2f3f22">Control de descuentos</div>
<div class="a" style="left:474px;top:693.0px;width:577px;height:3.5px;background:#dbedc3"></div>
<svg style="left:490px;top:718.3px" width="10" height="12" viewBox="0 0 10 12"><path d="M0 0L10 6L0 12Z" fill="#3b4045"/></svg>
<div class="t " style="left:505.0px;top:712.0px;font-size:22px;line-height:25.30px;color:#2f3f22;font-weight:normal;-webkit-text-stroke:0.35px #2f3f22">Comprobantes de Pago</div>
<div class="a" style="left:449px;top:793.6px;width:627px;height:560.0px;background:linear-gradient(to right,#afd473 0%,#b5d77d 22%,#b3d67b 40%,#8cc63f 79%,#8cc63f 100%)"></div>
<svg style="left:478px;top:815.5px" width="20" height="25" viewBox="0 0 20 25"><rect x="0" y="0" width="20" height="25" rx="3" fill="#5f7650"/><rect x="3" y="8" width="3" height="14" fill="#9bb27f"/><rect x="8.5" y="8" width="3" height="14" fill="#8aa070"/><rect x="14" y="16" width="3" height="6" fill="#a9c48a"/><circle cx="5" cy="4.5" r="2" fill="#b8d093"/></svg>
<div class="t " style="left:501.0px;top:813.7px;font-size:22px;line-height:25.30px;color:#4b6333;font-weight:normal;letter-spacing:0px;-webkit-text-stroke:0.25px #4b6333">Cuotas y Adeudos</div>
<div class="a" style="left:474px;top:842.4px;width:577px;height:490.5px;border:2.5px solid #c5e09d;border-radius:3px"></div>
<svg style="left:490px;top:867.1px" width="10" height="12" viewBox="0 0 10 12"><path d="M0 0L10 6L0 12Z" fill="#3b4045"/></svg>
<div class="t " style="left:505.0px;top:860.8px;font-size:22px;line-height:25.30px;color:#2f3f22;font-weight:normal;-webkit-text-stroke:0.35px #2f3f22">Generar cuotas y adeudos</div>
<div class="a" style="left:474px;top:902.9px;width:577px;height:3.5px;background:#dbedc3"></div>
<svg style="left:490px;top:928.2px" width="10" height="12" viewBox="0 0 10 12"><path d="M0 0L10 6L0 12Z" fill="#3b4045"/></svg>
<div class="t " style="left:505.0px;top:921.9px;font-size:22px;line-height:25.30px;color:#2f3f22;font-weight:normal;-webkit-text-stroke:0.35px #2f3f22">Adeudos recurrentes</div>
<div class="a" style="left:474px;top:964.0px;width:577px;height:3.5px;background:#dbedc3"></div>
<svg style="left:490px;top:989.2px" width="10" height="12" viewBox="0 0 10 12"><path d="M0 0L10 6L0 12Z" fill="#3b4045"/></svg>
<div class="t " style="left:505.0px;top:983.0px;font-size:22px;line-height:25.30px;color:#2f3f22;font-weight:normal;-webkit-text-stroke:0.35px #2f3f22">Editar Adeudos</div>
<div class="a" style="left:474px;top:1025.1px;width:577px;height:3.5px;background:#dbedc3"></div>
<svg style="left:490px;top:1050.3px" width="10" height="12" viewBox="0 0 10 12"><path d="M0 0L10 6L0 12Z" fill="#3b4045"/></svg>
<div class="t " style="left:505.0px;top:1044.0px;font-size:22px;line-height:25.30px;color:#2f3f22;font-weight:normal;-webkit-text-stroke:0.35px #2f3f22">Control Cobranza</div>
<div class="a" style="left:474px;top:1086.1px;width:577px;height:3.5px;background:#dbedc3"></div>
<svg style="left:490px;top:1111.4px" width="10" height="12" viewBox="0 0 10 12"><path d="M0 0L10 6L0 12Z" fill="#3b4045"/></svg>
<div class="t " style="left:505.0px;top:1105.1px;font-size:22px;line-height:25.30px;color:#2f3f22;font-weight:normal;-webkit-text-stroke:0.35px #2f3f22">Enviar/Imprimir Estado de Cuenta</div>
<div class="a" style="left:474px;top:1147.2px;width:577px;height:3.5px;background:#dbedc3"></div>
<svg style="left:490px;top:1172.5px" width="10" height="12" viewBox="0 0 10 12"><path d="M0 0L10 6L0 12Z" fill="#3b4045"/></svg>
<div class="t " style="left:505.0px;top:1166.2px;font-size:22px;line-height:25.30px;color:#2f3f22;font-weight:normal;-webkit-text-stroke:0.35px #2f3f22">Generar Recargos</div>
<div class="a" style="left:474px;top:1208.3px;width:577px;height:3.5px;background:#dbedc3"></div>
<svg style="left:490px;top:1233.5px" width="10" height="12" viewBox="0 0 10 12"><path d="M0 0L10 6L0 12Z" fill="#3b4045"/></svg>
<div class="t " style="left:505.0px;top:1227.2px;font-size:22px;line-height:25.30px;color:#2f3f22;font-weight:normal;-webkit-text-stroke:0.35px #2f3f22">Generar Recargos por Clasificación</div>
<div class="a" style="left:474px;top:1269.3px;width:577px;height:3.5px;background:#dbedc3"></div>
<svg style="left:490px;top:1294.6px" width="10" height="12" viewBox="0 0 10 12"><path d="M0 0L10 6L0 12Z" fill="#3b4045"/></svg>
<div class="t " style="left:505.0px;top:1288.3px;font-size:22px;line-height:25.30px;color:#2f3f22;font-weight:normal;-webkit-text-stroke:0.35px #2f3f22">Aplicar Descuento</div>
<div class="a" style="left:449px;top:1366.7px;width:627px;height:251.1px;background:linear-gradient(to right,#afd473 0%,#b5d77d 22%,#b3d67b 40%,#8cc63f 79%,#8cc63f 100%)"></div>
<svg style="left:476px;top:1389.7px" width="24" height="26" viewBox="0 0 24 26"><path d="M3 24C3 15 6 8 11 4" fill="none" stroke="#4f5f45" stroke-width="3.5" stroke-linecap="round"/><path d="M6 1H13V8Z" fill="#4f5f45"/><circle cx="13" cy="17" r="4" fill="#5a6a50"/><circle cx="18" cy="21" r="4.5" fill="#5a6a50"/><circle cx="18" cy="21" r="1.8" fill="#8fa078"/></svg>
<div class="t " style="left:501.0px;top:1387.4px;font-size:22px;line-height:25.30px;color:#4b6333;font-weight:normal;letter-spacing:0px;-webkit-text-stroke:0.25px #4b6333">Egresos</div>
<div class="a" style="left:474px;top:1414.8px;width:577px;height:185.8px;border:2.5px solid #c5e09d;border-radius:3px"></div>
<svg style="left:490px;top:1439.5px" width="10" height="12" viewBox="0 0 10 12"><path d="M0 0L10 6L0 12Z" fill="#3b4045"/></svg>
<div class="t " style="left:505.0px;top:1433.2px;font-size:22px;line-height:25.30px;color:#2f3f22;font-weight:normal;-webkit-text-stroke:0.35px #2f3f22">Capturar Egreso</div>
<div class="a" style="left:474px;top:1475.3px;width:577px;height:3.5px;background:#dbedc3"></div>
<svg style="left:490px;top:1500.6px" width="10" height="12" viewBox="0 0 10 12"><path d="M0 0L10 6L0 12Z" fill="#3b4045"/></svg>
<div class="t " style="left:505.0px;top:1494.3px;font-size:22px;line-height:25.30px;color:#2f3f22;font-weight:normal;-webkit-text-stroke:0.35px #2f3f22">Control de Egresos</div>
<div class="a" style="left:474px;top:1536.5px;width:577px;height:3.5px;background:#dbedc3"></div>
<svg style="left:490px;top:1561.7px" width="10" height="12" viewBox="0 0 10 12"><path d="M0 0L10 6L0 12Z" fill="#3b4045"/></svg>
<div class="t " style="left:505.0px;top:1555.4px;font-size:22px;line-height:25.30px;color:#2f3f22;font-weight:normal;-webkit-text-stroke:0.35px #2f3f22">Reporte detallado</div>
<div class="a" style="left:1125px;top:389px;width:807px;height:718px;border-style:solid;border-width:2.5px;border-color:#7db3c2 #6a9fb0 #6a9fb0 #7db3c2;box-shadow:inset 1.5px 1.5px 0 #c5eff6,-1px -1px 0 #eef0f8,2px 2px 3px rgba(0,0,0,.16)"></div>
<div class="a" style="left:1159px;top:402.7px;width:739px;height:614.6px;background:linear-gradient(to right,#3cbacf 0%,#41bcd1 22%,#3fbbd1 40%,#00b0dd 79%,#00b0dd 100%)"></div>
<svg style="left:1186px;top:425.6px" width="22" height="23" viewBox="0 0 22 23"><path d="M1.5 0V21.5H21" fill="none" stroke="#3a7a8a" stroke-width="3"/><path d="M7 18L10 10L14 17L19 5" fill="none" stroke="#357585" stroke-width="2.2" stroke-linejoin="round"/></svg>
<div class="t " style="left:1211.0px;top:423.0px;font-size:22px;line-height:25.30px;color:#2a5f6d;font-weight:normal;letter-spacing:0px;-webkit-text-stroke:0.25px #2a5f6d">Finanzas</div>
<div class="a" style="left:1184px;top:449.8px;width:689px;height:549.1px;border:2.5px solid #8fdcea;border-radius:3px"></div>
<svg style="left:1200px;top:474.5px" width="10" height="12" viewBox="0 0 10 12"><path d="M0 0L10 6L0 12Z" fill="#3b4045"/></svg>
<div class="t " style="left:1215.0px;top:468.2px;font-size:22px;line-height:25.30px;color:#1c3a44;font-weight:normal;-webkit-text-stroke:0.35px #1c3a44">Bancos y Cajas</div>
<div class="a" style="left:1184px;top:510.8px;width:689px;height:3.5px;background:#b5ecf6"></div>
<svg style="left:1200px;top:536.0px" width="10" height="12" viewBox="0 0 10 12"><path d="M0 0L10 6L0 12Z" fill="#3b4045"/></svg>
<div class="t " style="left:1215.0px;top:529.7px;font-size:22px;line-height:25.30px;color:#1c3a44;font-weight:normal;-webkit-text-stroke:0.35px #1c3a44">Fondos</div>
<div class="a" style="left:1184px;top:572.2px;width:689px;height:3.5px;background:#b5ecf6"></div>
<svg style="left:1200px;top:597.5px" width="10" height="12" viewBox="0 0 10 12"><path d="M0 0L10 6L0 12Z" fill="#3b4045"/></svg>
<div class="t " style="left:1215.0px;top:591.2px;font-size:22px;line-height:25.30px;color:#1c3a44;font-weight:normal;-webkit-text-stroke:0.35px #1c3a44">Presupuesto</div>
<div class="a" style="left:1184px;top:633.8px;width:689px;height:3.5px;background:#b5ecf6"></div>
<svg style="left:1200px;top:659.0px" width="10" height="12" viewBox="0 0 10 12"><path d="M0 0L10 6L0 12Z" fill="#3b4045"/></svg>
<div class="t " style="left:1215.0px;top:652.7px;font-size:22px;line-height:25.30px;color:#1c3a44;font-weight:normal;-webkit-text-stroke:0.35px #1c3a44">Resumen Financiero</div>
<div class="a" style="left:1184px;top:695.2px;width:689px;height:3.5px;background:#b5ecf6"></div>
<svg style="left:1200px;top:720.5px" width="10" height="12" viewBox="0 0 10 12"><path d="M0 0L10 6L0 12Z" fill="#3b4045"/></svg>
<div class="t " style="left:1215.0px;top:714.2px;font-size:22px;line-height:25.30px;color:#1c3a44;font-weight:normal;-webkit-text-stroke:0.35px #1c3a44">Antigüedad Adeudos</div>
<div class="a" style="left:1184px;top:756.8px;width:689px;height:3.5px;background:#b5ecf6"></div>
<svg style="left:1200px;top:782.0px" width="10" height="12" viewBox="0 0 10 12"><path d="M0 0L10 6L0 12Z" fill="#3b4045"/></svg>
<div class="t " style="left:1215.0px;top:775.7px;font-size:22px;line-height:25.30px;color:#1c3a44;font-weight:normal;-webkit-text-stroke:0.35px #1c3a44">Cuentas por Cobrar</div>
<div class="a" style="left:1184px;top:818.2px;width:689px;height:3.5px;background:#b5ecf6"></div>
<svg style="left:1200px;top:843.5px" width="10" height="12" viewBox="0 0 10 12"><path d="M0 0L10 6L0 12Z" fill="#3b4045"/></svg>
<div class="t " style="left:1215.0px;top:837.2px;font-size:22px;line-height:25.30px;color:#1c3a44;font-weight:normal;-webkit-text-stroke:0.35px #1c3a44">Adeudos y Recargos</div>
<div class="a" style="left:1184px;top:879.8px;width:689px;height:3.5px;background:#b5ecf6"></div>
<svg style="left:1200px;top:905.0px" width="10" height="12" viewBox="0 0 10 12"><path d="M0 0L10 6L0 12Z" fill="#3b4045"/></svg>
<div class="t " style="left:1215.0px;top:898.7px;font-size:22px;line-height:25.30px;color:#1c3a44;font-weight:normal;-webkit-text-stroke:0.35px #1c3a44">Morosos</div>
<div class="a" style="left:1184px;top:941.2px;width:689px;height:3.5px;background:#b5ecf6"></div>
<svg style="left:1200px;top:966.5px" width="10" height="12" viewBox="0 0 10 12"><path d="M0 0L10 6L0 12Z" fill="#3b4045"/></svg>
<div class="t " style="left:1215.0px;top:960.2px;font-size:22px;line-height:25.30px;color:#1c3a44;font-weight:normal;-webkit-text-stroke:0.35px #1c3a44">Control Activos Fijos</div>
<div class="a" style="left:1159px;top:1031.7px;width:739px;height:70.0px;background:linear-gradient(to right,#3cbacf 0%,#41bcd1 22%,#3fbbd1 40%,#00b0dd 79%,#00b0dd 100%)"></div>
<svg style="left:1185px;top:1052.3px" width="22" height="27" viewBox="0 0 22 27"><rect x="1" y="4" width="20" height="22" rx="2" fill="none" stroke="#3a7888" stroke-width="2"/><rect x="7" y="1" width="8" height="5" rx="1" fill="none" stroke="#3a7888" stroke-width="2"/><path d="M6 15L10 19L16 11" fill="none" stroke="#3a7888" stroke-width="2"/></svg>
<div class="t " style="left:1211.0px;top:1053.0px;font-size:22px;line-height:25.30px;color:#2a5f6d;font-weight:normal;letter-spacing:0px;-webkit-text-stroke:0.25px #2a5f6d">Tareas del Administrador - Tickets</div>
<div class="a" style="left:1949px;top:389px;width:753px;height:1133px;border-style:solid;border-width:2.5px;border-color:#e6c596 #b9a182 #b9a182 #e6c596;box-shadow:inset 1.5px 1.5px 0 #f8efe2,-1px -1px 0 #f3e6d3,2px 2px 3px rgba(0,0,0,.16)"></div>
<div class="a" style="left:1983px;top:402.6px;width:684px;height:427.4px;background:linear-gradient(to right,#f4b864 0%,#f5bd6d 22%,#f5bb69 40%,#fbb040 79%,#fbb040 100%)"></div>
<svg style="left:2009px;top:426.8px" width="23" height="21" viewBox="0 0 23 21"><path d="M1.5 8.5L9 1.5L15 7M3.5 8V18.5H8" fill="none" stroke="#a37b4a" stroke-width="2.6" stroke-linecap="round" stroke-linejoin="round"/><circle cx="15" cy="13.5" r="5.5" fill="none" stroke="#94703f" stroke-width="3"/></svg>
<div class="t " style="left:2034.0px;top:422.6px;font-size:22px;line-height:25.30px;color:#5e4d35;font-weight:normal;letter-spacing:0px;-webkit-text-stroke:0.25px #5e4d35">Configuración Residencial</div>
<div class="a" style="left:2007px;top:449.1px;width:635px;height:367.8px;border:2px solid #f8d8a8;border-radius:3px"></div>
<svg style="left:2023px;top:473.8px" width="10" height="12" viewBox="0 0 10 12"><path d="M0 0L10 6L0 12Z" fill="#3b4045"/></svg>
<div class="t " style="left:2038.0px;top:467.5px;font-size:22px;line-height:25.30px;color:#46341c;font-weight:normal;-webkit-text-stroke:0.35px #46341c">Datos generales</div>
<div class="a" style="left:2007px;top:510.2px;width:635px;height:3.5px;background:#f9dfbb"></div>
<svg style="left:2023px;top:535.4px" width="10" height="12" viewBox="0 0 10 12"><path d="M0 0L10 6L0 12Z" fill="#3b4045"/></svg>
<div class="t " style="left:2038.0px;top:529.1px;font-size:22px;line-height:25.30px;color:#46341c;font-weight:normal;-webkit-text-stroke:0.35px #46341c">Datos Financieros</div>
<div class="a" style="left:2007px;top:571.8px;width:635px;height:3.5px;background:#f9dfbb"></div>
<svg style="left:2023px;top:597.0px" width="10" height="12" viewBox="0 0 10 12"><path d="M0 0L10 6L0 12Z" fill="#3b4045"/></svg>
<div class="t " style="left:2038.0px;top:590.7px;font-size:22px;line-height:25.30px;color:#46341c;font-weight:normal;-webkit-text-stroke:0.35px #46341c">Personalizar Encabezado</div>
<div class="a" style="left:2007px;top:633.4px;width:635px;height:3.5px;background:#f9dfbb"></div>
<svg style="left:2023px;top:658.6px" width="10" height="12" viewBox="0 0 10 12"><path d="M0 0L10 6L0 12Z" fill="#3b4045"/></svg>
<div class="t " style="left:2038.0px;top:652.3px;font-size:22px;line-height:25.30px;color:#46341c;font-weight:normal;-webkit-text-stroke:0.35px #46341c">Configuración de permisos y roles de administrador</div>
<div class="a" style="left:2007px;top:695.0px;width:635px;height:3.5px;background:#f9dfbb"></div>
<svg style="left:2023px;top:720.2px" width="10" height="12" viewBox="0 0 10 12"><path d="M0 0L10 6L0 12Z" fill="#3b4045"/></svg>
<div class="t " style="left:2038.0px;top:713.9px;font-size:22px;line-height:25.30px;color:#46341c;font-weight:normal;-webkit-text-stroke:0.35px #46341c">Invitar a los Residentes a Usar el Sistema / Aplicación</div>
<div class="a" style="left:2007px;top:756.5px;width:635px;height:3.5px;background:#f9dfbb"></div>
<svg style="left:2023px;top:781.8px" width="10" height="12" viewBox="0 0 10 12"><path d="M0 0L10 6L0 12Z" fill="#3b4045"/></svg>
<div class="t " style="left:2038.0px;top:775.5px;font-size:22px;line-height:25.30px;color:#46341c;font-weight:normal;-webkit-text-stroke:0.35px #46341c">Establecer Presupuesto</div>
<div class="a" style="left:1983px;top:844.5px;width:684px;height:375.5px;background:linear-gradient(to right,#f4b864 0%,#f5bd6d 22%,#f5bb69 40%,#fbb040 79%,#fbb040 100%)"></div>
<svg style="left:2010px;top:866.2px" width="21" height="27" viewBox="0 0 21 27"><path d="M2 2H11L19 10V25H2Z" fill="none" stroke="#a57d4d" stroke-width="3.2" stroke-linejoin="round"/></svg>
<div class="t " style="left:2034.0px;top:865.2px;font-size:22px;line-height:25.30px;color:#5e4d35;font-weight:normal;letter-spacing:0px;-webkit-text-stroke:0.25px #5e4d35">Directorios</div>
<div class="a" style="left:2007px;top:892.2px;width:635px;height:310.2px;border:2px solid #f8d8a8;border-radius:3px"></div>
<svg style="left:2023px;top:917.0px" width="10" height="12" viewBox="0 0 10 12"><path d="M0 0L10 6L0 12Z" fill="#3b4045"/></svg>
<div class="t " style="left:2038.0px;top:910.7px;font-size:22px;line-height:25.30px;color:#46341c;font-weight:normal;-webkit-text-stroke:0.35px #46341c">Administrador y Residentes</div>
<div class="a" style="left:2007px;top:953.0px;width:635px;height:3.5px;background:#f9dfbb"></div>
<svg style="left:2023px;top:978.3px" width="10" height="12" viewBox="0 0 10 12"><path d="M0 0L10 6L0 12Z" fill="#3b4045"/></svg>
<div class="t " style="left:2038.0px;top:972.0px;font-size:22px;line-height:25.30px;color:#46341c;font-weight:normal;-webkit-text-stroke:0.35px #46341c">Vehicular</div>
<div class="a" style="left:2007px;top:1014.3px;width:635px;height:3.5px;background:#f9dfbb"></div>
<svg style="left:2023px;top:1039.5px" width="10" height="12" viewBox="0 0 10 12"><path d="M0 0L10 6L0 12Z" fill="#3b4045"/></svg>
<div class="t " style="left:2038.0px;top:1033.3px;font-size:22px;line-height:25.30px;color:#46341c;font-weight:normal;-webkit-text-stroke:0.35px #46341c">Empleados</div>
<div class="a" style="left:2007px;top:1075.6px;width:635px;height:3.5px;background:#f9dfbb"></div>
<svg style="left:2023px;top:1100.8px" width="10" height="12" viewBox="0 0 10 12"><path d="M0 0L10 6L0 12Z" fill="#3b4045"/></svg>
<div class="t " style="left:2038.0px;top:1094.5px;font-size:22px;line-height:25.30px;color:#46341c;font-weight:normal;-webkit-text-stroke:0.35px #46341c">Proveedores</div>
<div class="a" style="left:2007px;top:1136.8px;width:635px;height:3.5px;background:#f9dfbb"></div>
<svg style="left:2023px;top:1162.1px" width="10" height="12" viewBox="0 0 10 12"><path d="M0 0L10 6L0 12Z" fill="#3b4045"/></svg>
<div class="t " style="left:2038.0px;top:1155.8px;font-size:22px;line-height:25.30px;color:#46341c;font-weight:normal;-webkit-text-stroke:0.35px #46341c">Amenidades del Residencial</div>
<div class="a" style="left:1983px;top:1231.5px;width:684px;height:189.0px;background:linear-gradient(to right,#f4b864 0%,#f5bd6d 22%,#f5bb69 40%,#fbb040 79%,#fbb040 100%)"></div>
<svg style="left:2008px;top:1251.1px" width="22" height="26" viewBox="0 0 22 26"><path d="M3.5 1V25M11 1V25M18.5 1V25" stroke="#6e5a3c" stroke-width="2.6"/><rect x="0.5" y="8" width="6" height="4" rx="1" fill="#6e5a3c"/><rect x="8" y="15" width="6" height="4" rx="1" fill="#6e5a3c"/><rect x="15.5" y="5" width="6" height="4" rx="1" fill="#6e5a3c"/></svg>
<div class="t " style="left:2034.0px;top:1251.8px;font-size:22px;line-height:25.30px;color:#5e4d35;font-weight:normal;letter-spacing:0px;-webkit-text-stroke:0.25px #5e4d35">Mi Cuenta</div>
<div class="a" style="left:2007px;top:1279.2px;width:635px;height:124.0px;border:2px solid #f8d8a8;border-radius:3px"></div>
<svg style="left:2023px;top:1303.9px" width="10" height="12" viewBox="0 0 10 12"><path d="M0 0L10 6L0 12Z" fill="#3b4045"/></svg>
<div class="t " style="left:2038.0px;top:1297.6px;font-size:22px;line-height:25.30px;color:#46341c;font-weight:normal;-webkit-text-stroke:0.35px #46341c">Mi Suscripción</div>
<div class="a" style="left:2007px;top:1339.9px;width:635px;height:3.5px;background:#f9dfbb"></div>
<svg style="left:2023px;top:1365.1px" width="10" height="12" viewBox="0 0 10 12"><path d="M0 0L10 6L0 12Z" fill="#3b4045"/></svg>
<div class="t " style="left:2038.0px;top:1358.8px;font-size:22px;line-height:25.30px;color:#46341c;font-weight:normal;-webkit-text-stroke:0.35px #46341c">Pago de Suscripción</div>
<div class="a" style="left:1983px;top:1434px;width:684px;height:66.3px;background:linear-gradient(to right,#f4b864 0%,#f5bd6d 22%,#f5bb69 40%,#fbb040 79%,#fbb040 100%)"></div>
<svg style="left:2008px;top:1457.3px" width="24" height="25" viewBox="0 0 24 25"><circle cx="12" cy="13" r="10" fill="none" stroke="#7a6445" stroke-width="3"/><path d="M11 8V13.5L15 18" fill="none" stroke="#7a6445" stroke-width="2.6"/></svg>
<div class="t " style="left:2034.0px;top:1454.0px;font-size:22px;line-height:25.30px;color:#5e4d35;font-weight:normal;letter-spacing:0px;-webkit-text-stroke:0.25px #5e4d35">Historial</div>
<div class="a" style="left:-6px;top:-6px;width:9px;height:1660px;background:#1f78de"></div>
<div class="a" style="left:2803.3px;top:0;width:3px;height:1629px;background:#66a3d8"></div>
</div></body></html>
